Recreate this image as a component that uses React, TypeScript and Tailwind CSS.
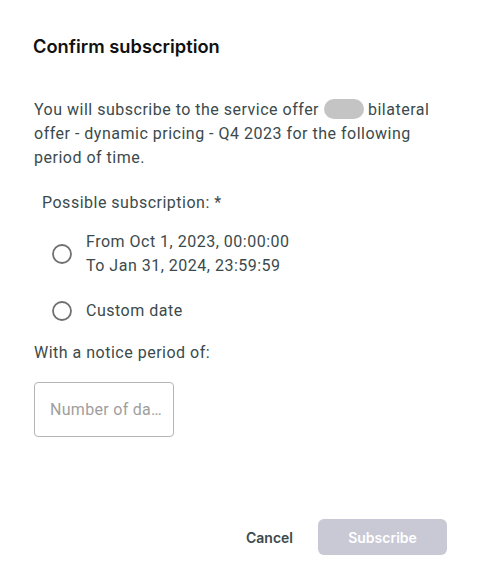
import React from "react";

function RadioCircle() {
  return (
    <svg width="20" height="20" viewBox="0 0 20 20" className="shrink-0">
      <circle cx="10" cy="10" r="9" fill="none" stroke="#707070" strokeWidth="1.8" />
    </svg>
  );
}

export default function App() {
  const body = { fontFamily: "Roboto, 'Liberation Sans', sans-serif" };
  const ui = { fontFamily: "Inter, 'Liberation Sans', sans-serif" };

  return (
    <div className="w-[479px] h-[586px] bg-white flex flex-col pl-[33px] pr-[32px] pt-[32px] pb-[31px]">
      {/* Title */}
      <h2 className="text-[18.3px] leading-[28px] font-semibold text-[#111111]" style={ui}>
        Confirm subscription
      </h2>

      <div
        className="flex flex-col text-[16px] leading-[24px] tracking-[0.5px] text-[#3b4a4c]"
        style={body}
      >
        <p className="mt-[38px] pl-px">
          You will subscribe to the service offer{" "}
          <span className="inline-block align-middle w-[40px] h-[20px] rounded-full bg-[#c4c4c4] -mt-[3px]" />{" "}
          bilateral offer - dynamic pricing - Q4 2023 for the following period of time.
        </p>

        <div className="mt-[21px] pl-[9px]">Possible subscription: *</div>

        {/* Radio options */}
        <label className="mt-[15px] flex items-center gap-[14px] pl-[19px]">
          <RadioCircle />
          <span className="flex flex-col">
            <span>From Oct 1, 2023, 00:00:00</span>
            <span>To Jan 31, 2024, 23:59:59</span>
          </span>
        </label>

        <label className="mt-[21px] flex items-center gap-[14px] pl-[19px]">
          <RadioCircle />
          <span>Custom date</span>
        </label>

        <div className="mt-[18px] pl-px">With a notice period of:</div>

        <div className="mt-[17px] ml-px w-[140px] h-[55px] rounded-[4px] border border-[#b5b5b5] flex items-center pl-[15px] pr-[6px]">
          <span className="text-[#9e9e9e] tracking-[0.3px] whitespace-nowrap">Number of da…</span>
        </div>
      </div>

      {/* Actions */}
      <div className="mt-auto flex items-center justify-end gap-[25px]" style={ui}>
        <button type="button" className="text-[14px] font-semibold text-[#3b4a4c]">
          Cancel
        </button>
        <button
          type="button"
          disabled
          className="w-[129px] h-[36px] rounded-[6px] bg-[#c9c9d5] text-white text-[14px] font-semibold"
        >
          Subscribe
        </button>
      </div>
    </div>
  );
}
